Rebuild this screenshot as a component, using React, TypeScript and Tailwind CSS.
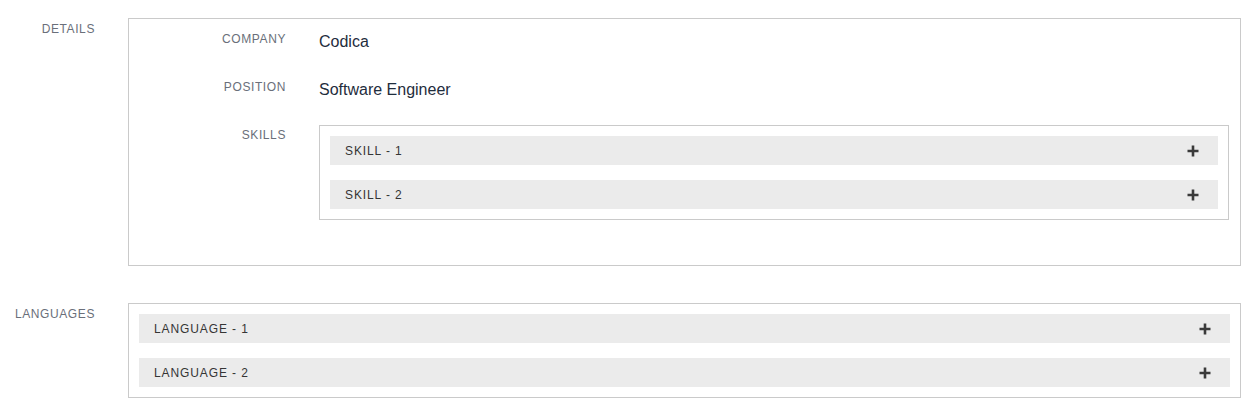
const Plus = () => (
    <svg width="12" height="12" viewBox="0 0 12 12" className="shrink-0">
        <path d="M6 0.5v11M0.5 6h11" stroke="#3a3a3a" strokeWidth="2.6" />
    </svg>
);

const Accordion = ({ items }: { items: string[] }) => (
    <div className="border border-[#cacaca] px-[10px] py-[10px] flex flex-col gap-[15px]">
        {items.map((item) => (
            <div key={item} className="h-[29px] bg-[#ebebeb] flex items-center justify-between pl-[15px] pr-[19px]">
                <span className="text-[12px] tracking-[0.9px] text-[#353535]">{item}</span>
                <Plus />
            </div>
        ))}
    </div>
);

const App = () => {
    return (
        <div className="w-[1258px] h-[413px] bg-white pt-[18px] font-['Liberation_Sans',Arial,sans-serif]">
            <div className="flex flex-row gap-[33px] pr-[17px]">
                <div className="w-[95px] shrink-0 text-right pt-[2px] text-[12px] leading-[18px] tracking-[0.6px] text-[#6a6f7a]">DETAILS</div>
                <div className="flex-1 border border-[#cacaca] pt-[10px] pb-[45px] pr-[11px] flex flex-col gap-[22px]">
                    <div className="flex flex-row gap-[33px]">
                        <div className="w-[157px] shrink-0 text-right pt-px text-[12px] leading-[18px] tracking-[0.6px] text-[#6a6f7a]">COMPANY</div>
                        <div className="text-[16px] leading-[26px] text-[#1f2d3d]">Codica</div>
                    </div>
                    <div className="flex flex-row gap-[33px]">
                        <div className="w-[157px] shrink-0 text-right pt-px text-[12px] leading-[18px] tracking-[0.6px] text-[#6a6f7a]">POSITION</div>
                        <div className="text-[16px] leading-[26px] text-[#1f2d3d]">Software Engineer</div>
                    </div>
                    <div className="flex flex-row gap-[33px]">
                        <div className="w-[157px] shrink-0 text-right pt-px text-[12px] leading-[18px] tracking-[0.6px] text-[#6a6f7a]">SKILLS</div>
                        <div className="flex-1">
                            <Accordion items={['SKILL - 1', 'SKILL - 2']} />
                        </div>
                    </div>
                </div>
            </div>
            <div className="flex flex-row gap-[33px] pr-[17px] mt-[37px]">
                <div className="w-[95px] shrink-0 text-right pt-[2px] text-[12px] leading-[18px] tracking-[0.6px] text-[#6a6f7a]">LANGUAGES</div>
                <div className="flex-1">
                    <Accordion items={['LANGUAGE - 1', 'LANGUAGE - 2']} />
                </div>
            </div>
        </div>
    );
};

export default App;
